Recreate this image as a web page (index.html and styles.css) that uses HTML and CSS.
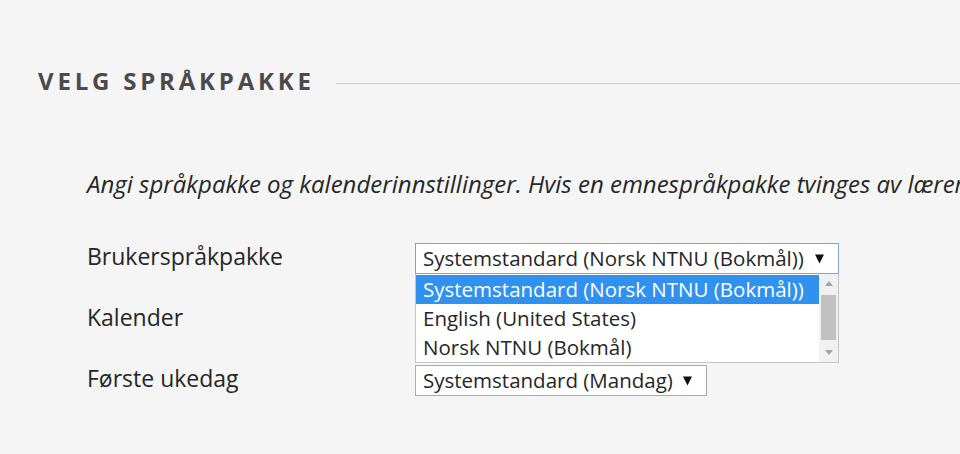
FILE: index.html
```html
<!DOCTYPE html>
<html lang="no">
<head>
<meta charset="utf-8">
<title>Velg språkpakke</title>
<link rel="stylesheet" href="styles.css">
</head>
<body>
<div class="page">
  <div class="section-head">
    <h2 class="title">VELG SPRÅKPAKKE</h2>
    <div class="rule"></div>
  </div>
  <p class="intro">Angi språkpakke og kalenderinnstillinger. Hvis en emnespråkpakke tvinges av læreren, vil den overstyre denne innstillingen.</p>
  <div class="form">
    <div class="label">Brukerspråkpakke</div>
    <div class="control">
      <div class="select select-lang focused"><span class="value">Systemstandard (Norsk NTNU (Bokmål))</span><svg class="arrow" width="9" height="10" viewBox="0 0 9 10"><path d="M0 0.5 H9 L4.5 9.5 Z" fill="#111"/></svg></div>
      <div class="dropdown">
        <div class="options">
          <div class="option selected">Systemstandard (Norsk NTNU (Bokmål))</div>
          <div class="option">English (United States)</div>
          <div class="option">Norsk NTNU (Bokmål)</div>
        </div>
        <div class="scrollbar">
          <div class="sb-btn"><svg width="8" height="5" viewBox="0 0 8 5"><path d="M0 5 L4 0 L8 5 Z" fill="#a3a3a3"/></svg></div>
          <div class="sb-track"><div class="sb-thumb"></div></div>
          <div class="sb-btn"><svg width="8" height="5" viewBox="0 0 8 5"><path d="M0 0 L4 5 L8 0 Z" fill="#a3a3a3"/></svg></div>
        </div>
      </div>
    </div>
    <div class="label">Kalender</div>
    <div class="control"></div>
    <div class="label">Første ukedag</div>
    <div class="control">
      <div class="select select-day"><span class="value">Systemstandard (Mandag)</span><svg class="arrow" width="9" height="10" viewBox="0 0 9 10"><path d="M0 0.5 H9 L4.5 9.5 Z" fill="#111"/></svg></div>
    </div>
  </div>
</div>
</body>
</html>
```
FILE: styles.css
```css
html, body {
  margin: 0;
  padding: 0;
  background: #f5f5f5;
  overflow: hidden;
  width: 960px;
  height: 454px;
}
body {
  font-family: "Open Sans", "Noto Sans", sans-serif;
  color: #262626;
}
.page {
  padding: 65px 0 0 38px;
}
.section-head {
  display: flex;
  align-items: flex-start;
  gap: 21px;
}
.title {
  margin: 0;
  font-size: 24px;
  font-weight: 700;
  letter-spacing: 3.8px;
  color: #4b4b4b;
  line-height: 32px;
  white-space: nowrap;
}
.rule {
  flex: 1;
  height: 1px;
  margin-top: 18px;
  background: #cdcdcd;
}
.intro {
  margin: 72px 0 0 49px;
  font-style: italic;
  font-size: 24px;
  white-space: nowrap;
  line-height: 30px;
}
.form {
  margin: 44px 0 0 49px;
  display: grid;
  grid-template-columns: 328px auto;
  grid-auto-rows: 31px;
  row-gap: 30px;
  justify-items: start;
  align-items: start;
}
.label {
  font-size: 23px;
  line-height: 26px;
  white-space: nowrap;
}
.control {
  position: relative;
}
.select {
  box-sizing: border-box;
  height: 31px;
  border: 1px solid #ababab;
  background: #fff;
  padding: 0 14px 0 7px;
  display: flex;
  align-items: center;
  justify-content: space-between;
}
.value {
  font-size: 20.5px;
  line-height: 29px;
  white-space: nowrap;
}
.select-lang {
  width: 424px;
}
.select-day {
  width: 292px;
}
.focused {
  border-color: #7fa2da;
}
.arrow {
  display: block;
  flex: none;
}
.dropdown {
  position: absolute;
  left: 0;
  top: 31px;
  width: 424px;
  height: 89px;
  box-sizing: border-box;
  border: 1px solid #c4c4c4;
  border-top: 0;
  background: #fff;
  display: flex;
  z-index: 2;
}
.options {
  flex: 1;
  padding-top: 1px;
}
.option {
  height: 29px;
  line-height: 29px;
  padding: 0 7px;
  font-size: 20.5px;
  white-space: nowrap;
}
.option.selected {
  background: #3191ee;
  color: #fff;
}
.scrollbar {
  width: 19px;
  background: #f1f1f1;
  display: flex;
  flex-direction: column;
}
.sb-btn {
  height: 19px;
  display: flex;
  align-items: center;
  justify-content: center;
}
.sb-track {
  flex: 1;
  padding: 2px 2px 3px 2px;
  display: flex;
}
.sb-thumb {
  flex: 1;
  background: #c1c1c1;
}
```
